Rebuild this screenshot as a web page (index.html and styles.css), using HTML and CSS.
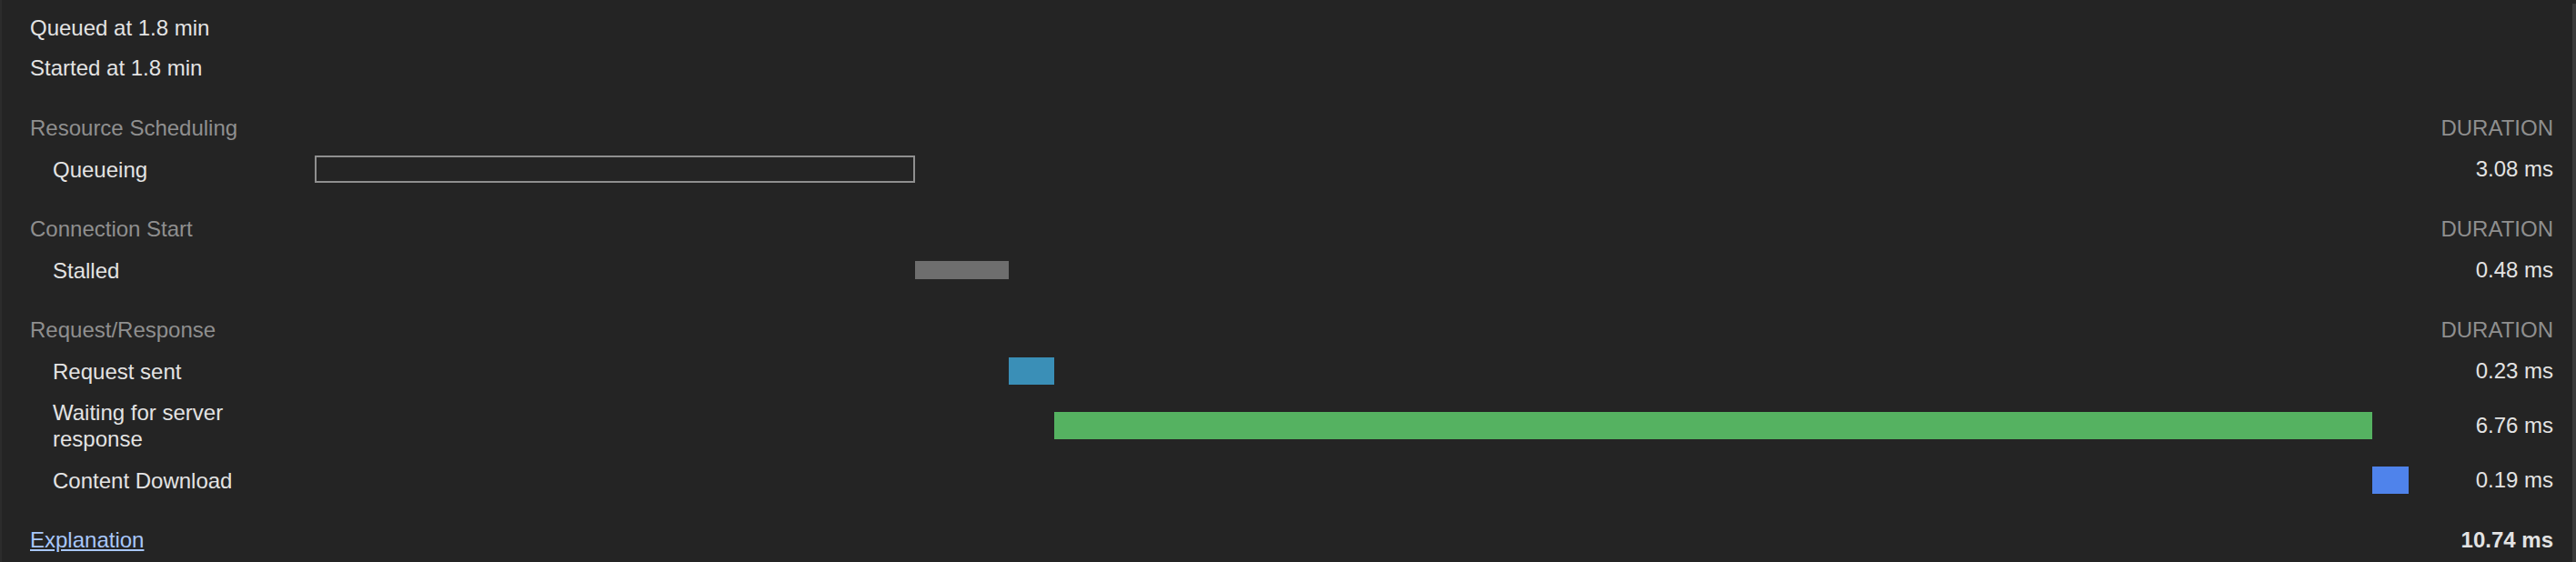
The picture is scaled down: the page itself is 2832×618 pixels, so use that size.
FILE: index.html
```html
<!DOCTYPE html>
<html lang="en">
<head>
<meta charset="utf-8">
<title>Timing</title>
<link rel="stylesheet" href="styles.css">
</head>
<body>
<div class="frame">
  <div class="panel">
    <div class="meta">
      <div class="meta-row">Queued at 1.8 min</div>
      <div class="meta-row">Started at 1.8 min</div>
    </div>

    <div class="group-row group-first">
      <span class="group-title">Resource Scheduling</span>
      <span></span>
      <span class="dur-head">DURATION</span>
    </div>
    <div class="row">
      <span class="label">Queueing</span>
      <div class="track"><div class="bar bar-queueing" style="margin-left:0%;width:28.671%"></div></div>
      <span class="dur">3.08 ms</span>
    </div>

    <div class="group-row">
      <span class="group-title">Connection Start</span>
      <span></span>
      <span class="dur-head">DURATION</span>
    </div>
    <div class="row">
      <span class="label">Stalled</span>
      <div class="track"><div class="bar bar-stalled" style="margin-left:28.671%;width:4.474%"></div></div>
      <span class="dur">0.48 ms</span>
    </div>

    <div class="group-row">
      <span class="group-title">Request/Response</span>
      <span></span>
      <span class="dur-head">DURATION</span>
    </div>
    <div class="row">
      <span class="label">Request sent</span>
      <div class="track"><div class="bar bar-sending" style="margin-left:33.145%;width:2.172%"></div></div>
      <span class="dur">0.23 ms</span>
    </div>
    <div class="row">
      <span class="label label-wrap">Waiting for server response</span>
      <div class="track"><div class="bar bar-waiting" style="margin-left:35.317%;width:62.945%"></div></div>
      <span class="dur">6.76 ms</span>
    </div>
    <div class="row">
      <span class="label">Content Download</span>
      <div class="track"><div class="bar bar-download" style="margin-left:98.262%;width:1.738%"></div></div>
      <span class="dur">0.19 ms</span>
    </div>

    <div class="footer-row">
      <a class="explain" href="#">Explanation</a>
      <span></span>
      <span class="total">10.74 ms</span>
    </div>
  </div>
  <div class="scrollbar"></div>
</div>
</body>
</html>
```

FILE: styles.css
```css
html, body {
  margin: 0;
  padding: 0;
  background: #242424;
}

body {
  width: 2832px;
  height: 618px;
  overflow: hidden;
  font-family: "Liberation Sans", Arial, Helvetica, sans-serif;
  font-size: 24px;
  color: #e3e3e3;
}

.frame {
  display: flex;
  height: 618px;
}

.panel {
  flex: 1;
  border-left: 2px solid #2c2c2c;
  padding: 9px 21px 0 31px;
  box-sizing: border-box;
}

.scrollbar {
  width: 4px;
  margin-top: 4px;
  background: #3a3a3a;
}

.meta-row {
  height: 44px;
  line-height: 44px;
  white-space: nowrap;
}

.group-row,
.row,
.footer-row {
  display: grid;
  grid-template-columns: 313px 1fr 159px;
  align-items: center;
}

.group-row {
  padding-top: 21px;
  height: 30px;
  line-height: 30px;
  color: #8f8f8f;
}

.group-first {
  padding-top: 29px;
}

.dur-head {
  text-align: right;
  color: #8f8f8f;
}

.row {
  height: 60px;
}

.label {
  padding-left: 25px;
  line-height: 29px;
}

.label-wrap {
  max-width: 230px;
}

.track {
  display: flex;
  align-items: center;
  height: 60px;
}

.bar {
  height: 30px;
  box-sizing: border-box;
  flex: none;
}

.bar-queueing {
  border: 2px solid #8f8f8f;
  background: transparent;
}

.bar-stalled {
  height: 20px;
  background: #6e6e6e;
}

.bar-sending {
  background: #3a8fb7;
}

.bar-waiting {
  background: #55b261;
}

.bar-download {
  background: #4f83eb;
}

.dur {
  text-align: right;
}

.footer-row {
  margin-top: 18px;
  height: 36px;
  line-height: 36px;
}

.explain {
  color: #a8c7fa;
  text-decoration: underline;
  justify-self: start;
}

.total {
  text-align: right;
  font-weight: bold;
}
```
